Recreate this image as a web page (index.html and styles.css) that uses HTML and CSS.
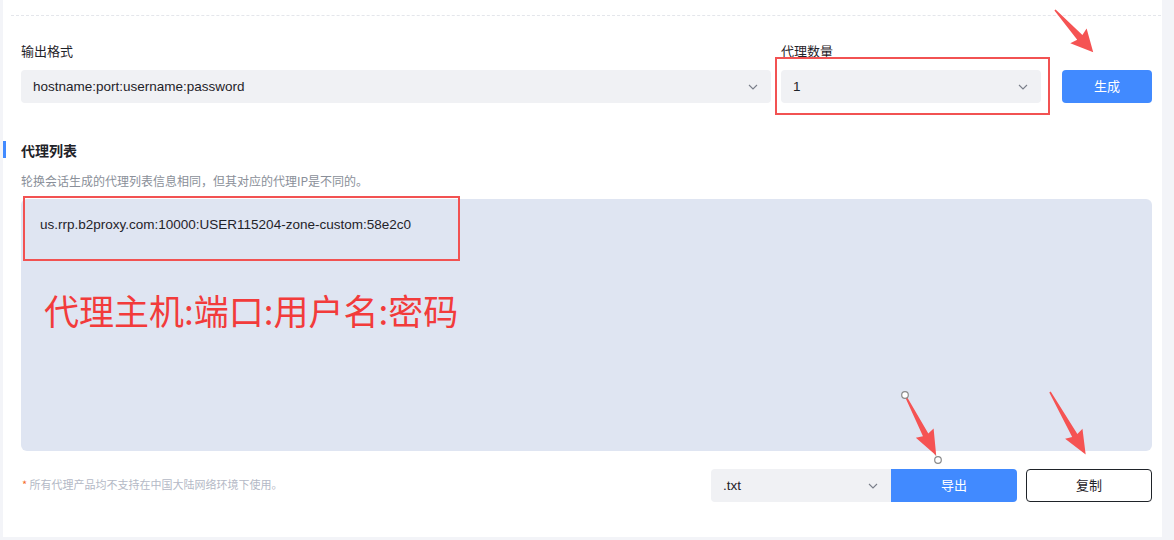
FILE: index.html
```html
<!DOCTYPE html>
<html lang="zh-CN">
<head>
    <meta charset="UTF-8">
    <meta name="viewport" content="width=device-width, initial-scale=1.0">
    <title>代理列表</title>
    <link rel="stylesheet" href="styles.css">
</head>
<body>
    <div class="panel">
        <div class="divider"></div>
        <div class="content">
            <div class="form-row">
                <div class="field field-format">
                    <div class="label">输出格式</div>
                    <div class="select">
                        <span>hostname:port:username:password</span>
                        <svg class="chevron" width="10" height="6" viewBox="0 0 10 6"><path d="M1 1l4 4 4-4" fill="none" stroke="#7a7f8a" stroke-width="1.1"/></svg>
                    </div>
                </div>
                <div class="field field-count">
                    <div class="label">代理数量</div>
                    <div class="select">
                        <span>1</span>
                        <svg class="chevron" width="10" height="6" viewBox="0 0 10 6"><path d="M1 1l4 4 4-4" fill="none" stroke="#7a7f8a" stroke-width="1.1"/></svg>
                    </div>
                </div>
                <button class="btn btn-primary btn-generate">生成</button>
            </div>

            <div class="section-title">代理列表</div>
            <div class="section-desc">轮换会话生成的代理列表信息相同，但其对应的代理IP是不同的。</div>

            <div class="proxy-box">
                <div class="proxy-line">us.rrp.b2proxy.com:10000:USER115204-zone-custom:58e2c0</div>
            </div>

            <div class="bottom-row">
                <div class="note"><span class="star">*</span> 所有代理产品均不支持在中国大陆网络环境下使用。</div>
                <div class="actions">
                    <div class="select select-ext">
                        <span>.txt</span>
                        <svg class="chevron" width="10" height="6" viewBox="0 0 10 6"><path d="M1 1l4 4 4-4" fill="none" stroke="#7a7f8a" stroke-width="1.1"/></svg>
                    </div>
                    <button class="btn btn-primary btn-export">导出</button>
                    <button class="btn btn-outline btn-copy">复制</button>
                </div>
            </div>
        </div>

        <!-- annotations -->
        <div class="mark mark-count"></div>
        <div class="mark mark-line"></div>
        <div class="big-note">代理主机:端口:用户名:密码</div>
    </div>

    <svg class="arrows" width="1174" height="540" viewBox="0 0 1174 540">
        <g transform="translate(1055 10) rotate(47.9)">
            <polygon points="0,-0.8 37,-3.5 35,-11 57,0 35,11 37,3.5 0,0.8" fill="#f55353"/>
        </g>
        <line x1="905" y1="395" x2="938" y2="460" stroke="#a0a0a0" stroke-width="1" stroke-dasharray="3 2"/>
        <g transform="translate(905 395) rotate(62.7)">
            <polygon points="0,-0.8 45,-3 43,-10 68,0 43,10 45,3 0,0.8" fill="#f55353"/>
        </g>
        <circle cx="905" cy="395" r="3.3" fill="#fff" stroke="#8a8a8a" stroke-width="1.2"/>
        <circle cx="938" cy="460" r="3.3" fill="#fff" stroke="#8a8a8a" stroke-width="1.2"/>
        <g transform="translate(1050 392) rotate(60.3)">
            <polygon points="0,-0.8 50,-3 48,-10 72,0 48,10 50,3 0,0.8" fill="#f55353"/>
        </g>
    </svg>
</body>
</html>
```

FILE: styles.css
```css
* { box-sizing: border-box; margin: 0; padding: 0; }
body {
    background-color: #f3f4f8;
    font-family: "Liberation Sans", "Noto Sans CJK SC", sans-serif;
    color: #1f2329;
    position: relative;
    width: 1174px;
    height: 540px;
    overflow: hidden;
}
.panel {
    position: relative;
    margin-left: 3px;
    width: 1159px;
    height: 537px;
    background-color: #fff;
    padding-top: 15px;
}
.divider {
    margin: 0 1px 0 8px;
    border-top: 1px dashed #e4e6eb;
}
.content {
    padding: 26px 10px 0 18px;
}
.form-row {
    display: flex;
    align-items: flex-end;
}
.field-format { width: 750px; }
.field-count { width: 260px; margin-left: 10px; }
.label {
    font-size: 13px;
    line-height: 20px;
    margin-bottom: 8px;
    color: #1f2329;
}
.select {
    height: 33px;
    background-color: #f0f1f4;
    border-radius: 4px;
    display: flex;
    align-items: center;
    justify-content: space-between;
    padding: 0 12px 0 12px;
    font-size: 13.5px;
    color: #1f2329;
}
.chevron { margin-right: 1px; }
.btn {
    height: 33px;
    border: none;
    border-radius: 4px;
    padding-bottom: 2px;
    font-family: "Noto Sans CJK SC", sans-serif;
    font-size: 13px;
    cursor: pointer;
}
.btn-primary {
    background-color: #418aff;
    color: #fff;
}
.btn-generate {
    width: 90px;
    margin-left: 21px;
}
.section-title {
    position: relative;
    margin-top: 37px;
    font-size: 14px;
    font-weight: bold;
    line-height: 20px;
    font-family: "Noto Sans CJK SC", sans-serif;
}
.section-title::before {
    content: "";
    position: absolute;
    left: -18px;
    top: 1px;
    width: 3px;
    height: 17px;
    background-color: #418aff;
}
.section-desc {
    margin-top: 11px;
    font-size: 12px;
    line-height: 20px;
    color: #8a8f99;
    font-family: "Noto Sans CJK SC", sans-serif;
}
.proxy-box {
    margin-top: 8px;
    height: 252px;
    background-color: #dfe5f2;
    border-radius: 6px;
    padding: 17px 19px;
}
.proxy-line {
    font-size: 13.5px;
    line-height: 18px;
    color: #1f2329;
}
.bottom-row {
    margin-top: 18px;
    display: flex;
    align-items: center;
    justify-content: space-between;
}
.note {
    padding-left: 1px;
    padding-bottom: 3px;
    font-size: 11px;
    color: #b4b9c6;
    font-family: "Noto Sans CJK SC", sans-serif;
}
.star { color: #f56c2c; }
.actions {
    display: flex;
    align-items: center;
}
.select-ext {
    width: 180px;
    border-radius: 4px 0 0 4px;
}
.btn-export {
    width: 126px;
    border-radius: 0 4px 4px 0;
}
.btn-outline {
    background-color: #fff;
    color: #1f2329;
    border: 1px solid #1f2329;
}
.btn-copy {
    width: 126px;
    margin-left: 9px;
}
.mark {
    position: absolute;
    border: 2px solid #f25252;
}
.mark-count {
    left: 772px;
    top: 57px;
    width: 275px;
    height: 58px;
}
.mark-line {
    left: 20px;
    top: 196px;
    width: 437px;
    height: 65px;
}
.big-note {
    position: absolute;
    left: 41px;
    top: 288px;
    font-size: 35px;
    line-height: 44px;
    color: #f23b3b;
    font-family: "Noto Sans CJK SC", sans-serif;
}
.arrows {
    position: absolute;
    left: 0;
    top: 0;
    pointer-events: none;
}
```
